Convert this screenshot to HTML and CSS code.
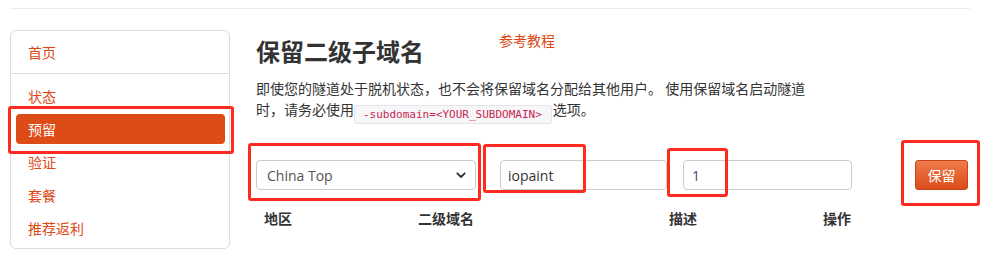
FILE: index.html
```html
<!DOCTYPE html>
<html lang="zh-CN">
<head>
<meta charset="utf-8">
<title>保留二级子域名</title>
<link rel="stylesheet" href="styles.css">
</head>
<body>
<div class="page">
  <div class="top-rule"></div>
  <div class="layout">
    <nav class="sidebar">
      <a class="nav-home" href="#">首页</a>
      <ul class="nav-list">
        <li><a href="#">状态</a></li>
        <li><a class="active" href="#">预留</a></li>
        <li><a href="#">验证</a></li>
        <li><a href="#">套餐</a></li>
        <li><a href="#">推荐返利</a></li>
      </ul>
    </nav>
    <main class="main">
      <div class="head-row">
        <h1 class="title">保留二级子域名</h1>
        <a class="ref-link" href="#">参考教程</a>
      </div>
      <p class="desc">即使您的隧道处于脱机状态，也不会将保留域名分配给其他用户。 使用保留域名启动隧道时，请务必使用<code class="code">-subdomain=&lt;YOUR_SUBDOMAIN&gt;</code>选项。</p>
      <div class="form-row">
        <div class="select">
          <span>China Top</span>
          <svg class="chev" width="10" height="7" viewBox="0 0 10 7"><path d="M1.3 1.3 L5 5 L8.7 1.3" fill="none" stroke="#333" stroke-width="1.8" stroke-linecap="round" stroke-linejoin="round"/></svg>
        </div>
        <div class="input input-sub">iopaint</div>
        <div class="input input-desc">1</div>
        <button class="btn">保留</button>
      </div>
      <div class="head-cols">
        <span>地区</span>
        <span>二级域名</span>
        <span>描述</span>
        <span>操作</span>
      </div>
    </main>
  </div>
  <div class="mark mark-nav"></div>
  <div class="mark mark-select"></div>
  <div class="mark mark-sub"></div>
  <div class="mark mark-desc"></div>
  <div class="mark mark-btn"></div>
</div>
</body>
</html>
```
FILE: styles.css
```css
* { box-sizing: border-box; }
html, body { margin: 0; padding: 0; background: #fff; }
body {
  font-family: "Noto Sans CJK SC", "Noto Sans", sans-serif;
  font-size: 14px;
  color: #333;
}
.page { position: relative; width: 982px; height: 269px; padding: 0 12px 0 10px; overflow: hidden; }
.top-rule { margin-top: 8px; height: 1px; background: #ececec; }
.layout { display: flex; align-items: flex-start; margin-top: 21px; gap: 26px; }

.sidebar {
  width: 220px;
  border: 1px solid #dcdcdc;
  border-radius: 6px;
  display: flex;
  flex-direction: column;
}
.sidebar a { color: #dd4814; text-decoration: none; line-height: 20px; }
.nav-home { display: block; height: 43px; padding: 11px 17px 0; border-bottom: 1px solid #dcdcdc; }
.nav-list { list-style: none; margin: 0; padding: 7px 4px 5px 5px; }
.nav-list li { margin-bottom: 3px; }
.nav-list li:last-child { margin-bottom: 0; }
.nav-list a { display: block; height: 30px; padding: 5px 12px; border-radius: 4px; }
.nav-list a.active { background: #dd4b16; color: #fff; }

.main { flex: 1; }
.head-row { display: flex; align-items: flex-start; }
.title { margin: 6px 0 0; font-size: 24px; line-height: 29px; font-weight: bold; color: #333; }
.ref-link { margin-left: 75px; color: #dd4814; text-decoration: none; line-height: 20px; }
.desc { width: 560px; margin: 13px 0 0; line-height: 21px; }
.code {
  display: inline-block;
  vertical-align: -3px;
  font-family: "DejaVu Sans Mono", monospace;
  font-size: 11px;
  line-height: 17px;
  color: #c7254e;
  background: #f7f7f9;
  border: 1px solid #e4e4ea;
  border-radius: 3px;
  padding: 0 9px 0 8px;
  margin: 0 1px 0 0;
}

.form-row { display: flex; align-items: center; margin-top: 36px; height: 30px; }
.select, .input {
  height: 30px;
  border: 1px solid #ccc;
  border-radius: 4px;
  display: flex;
  align-items: center;
  font-family: "Open Sans", "Noto Sans", sans-serif;
  font-size: 14px;
  color: #555;
}
.select { width: 220px; padding: 0 9px 0 10px; justify-content: space-between; }
.input-sub { width: 167px; margin-left: 24px; padding-left: 7px; color: #333; }
.input-desc { width: 169px; margin-left: 16px; padding-left: 8px; color: #3a4a7a; }
.btn {
  margin-left: 63px;
  width: 53px;
  height: 30px;
  border: 1px solid #c8441a;
  border-radius: 3px;
  background: linear-gradient(#ef7b4b, #da4c19);
  color: #fff;
  font-family: "Noto Sans CJK SC", sans-serif;
  font-size: 14px;
  padding: 0;
}

.head-cols { display: grid; grid-template-columns: 154px 251px 154px 1fr; margin-top: 18px; font-weight: bold; line-height: 20px; }
.head-cols span { padding-left: 8px; }

.mark { position: absolute; border: 3px solid #ff2a20; border-radius: 3px; }
.mark-nav { left: 8px; top: 106px; width: 226px; height: 48px; }
.mark-select { left: 248px; top: 143px; width: 233px; height: 58px; }
.mark-sub { left: 483px; top: 144px; width: 103px; height: 49px; }
.mark-desc { left: 667px; top: 148px; width: 61px; height: 49px; }
.mark-btn { left: 901px; top: 140px; width: 79px; height: 66px; }
```
